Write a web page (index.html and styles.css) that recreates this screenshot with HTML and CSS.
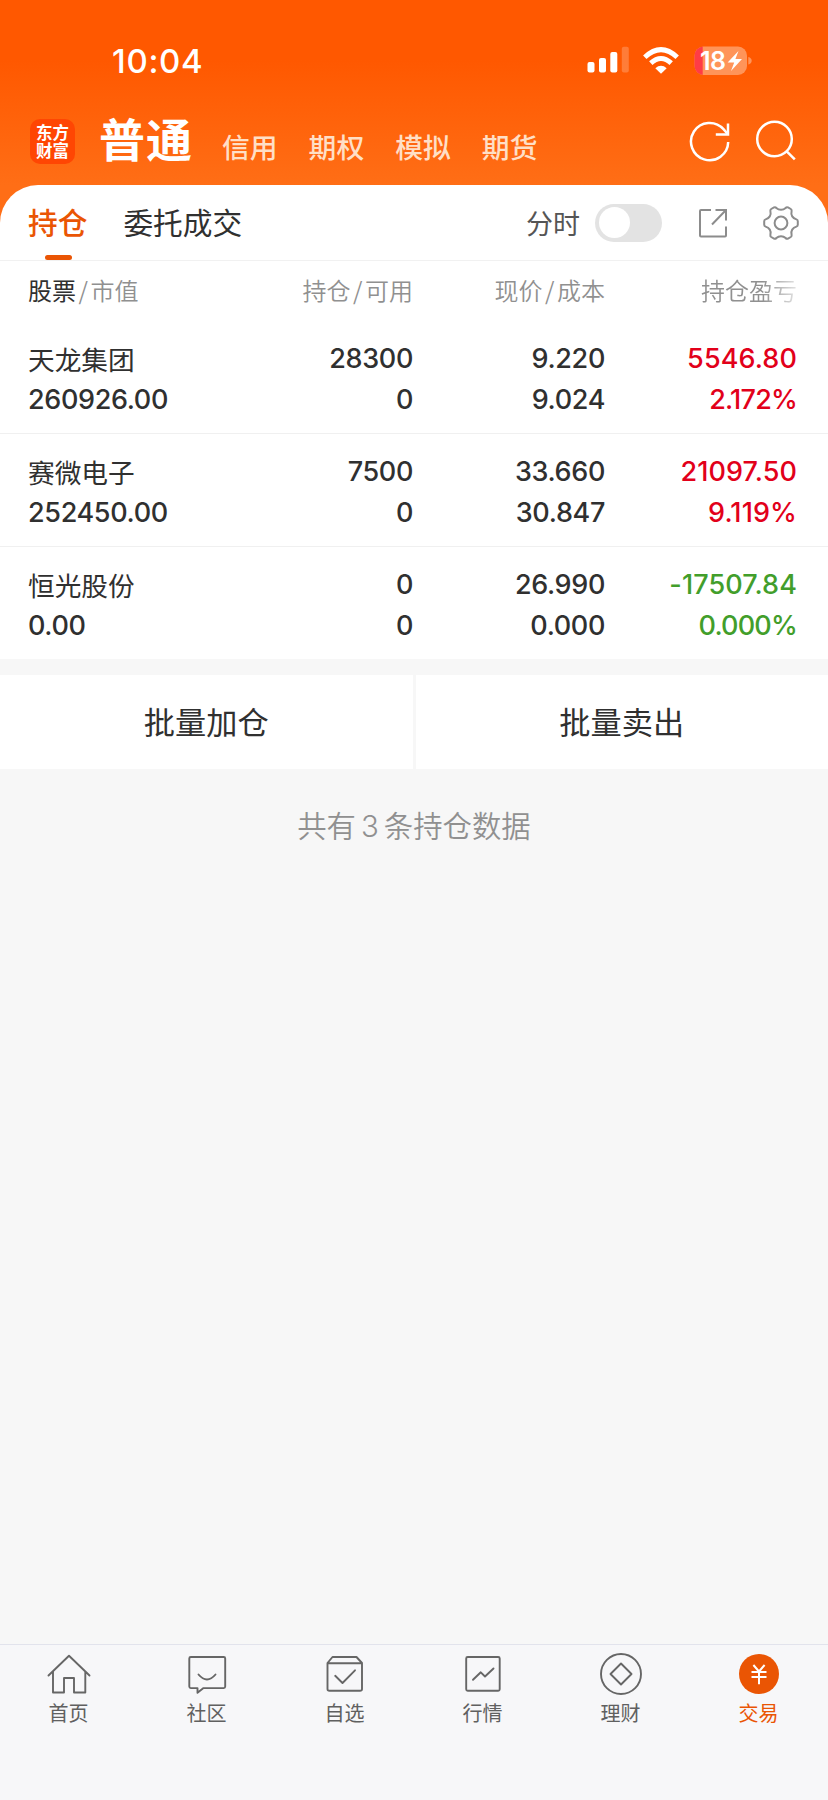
FILE: index.html
```html
<!DOCTYPE html>
<html lang="zh-CN">
<head>
<meta charset="utf-8">
<title>持仓</title>
<link rel="stylesheet" href="styles.css">
</head>
<body>
<div class="app">
  <header class="top">
    <div class="status">
      <span class="time">10:04</span>
      <svg class="status-icons" width="170" height="36" viewBox="584 43 170 36">
        <g fill="#fff">
          <rect x="587.5" y="62" width="7" height="10.5" rx="2"/>
          <rect x="599" y="58" width="7" height="14.5" rx="2"/>
          <rect x="610.3" y="52" width="7" height="20.5" rx="2"/>
          <rect x="621.8" y="46.8" width="7" height="25.7" rx="2" opacity=".22"/>
        </g>
        <g fill="none" stroke="#fff" stroke-width="5">
          <path d="M644.8 57.2Q661 42 677.2 57.2"/>
          <path d="M650.8 63.2Q661 53.8 671.2 63.2"/>
        </g>
        <path d="M655.3 68.2Q661 63.5 666.7 68.2L661 73.8Z" fill="#fff"/>
        <clipPath id="bat"><rect x="694.5" y="46.5" width="52.5" height="28.5" rx="9"/></clipPath>
        <g clip-path="url(#bat)">
          <rect x="694" y="46" width="54" height="30" fill="#ff9459"/>
          <rect x="694" y="46" width="8.7" height="30" fill="#ff3c46"/>
        </g>
        <path d="M748.3 57q3.4 1 3.4 3.8t-3.4 3.8z" fill="#ff9459"/>
        <text class="bat-text" x="700" y="70">18</text>
        <path d="M738.5 51L727.6 62.6h6.6l-3.2 8.4 11-12h-6.6z" fill="#fff"/>
      </svg>
    </div>
    <div class="nav-top">
      <div class="logo"><span>东方</span><span>财富</span></div>
      <span class="account">普通</span>
      <nav class="accounts"><span>信用</span><span>期权</span><span>模拟</span><span>期货</span></nav>
      <svg class="top-icons" width="112" height="44" viewBox="687 118 112 44" fill="none" stroke="#fff" stroke-width="2.5">
        <path d="M728.2 142A18.6 18.6 0 1 1 723.5 129.2L727.5 133.8"/>
        <path d="M728 123.5V134.4H715.8"/>
        <circle cx="774.5" cy="139" r="17.3"/>
        <path d="M786.7 151.3L794.8 159.4"/>
      </svg>
    </div>
  </header>

  <main class="sheet">
    <div class="tabs">
      <span class="tab active">持仓</span>
      <span class="tab">委托成交</span>
      <span class="switch-label">分时</span>
      <span class="switch"><i></i></span>
      <svg class="tool share" width="32" height="32" viewBox="0 0 32 32" fill="none" stroke="#8c8c8c" stroke-width="2">
        <path d="M14 3H4Q3 3 3 4V28.5Q3 29.5 4 29.5H28Q29 29.5 29 28.5V19.5M18.5 3H29V13.5M29 3L15 17.5"/>
      </svg>
      <svg class="tool gear" width="36" height="36" viewBox="-18 -18 36 36" fill="none" stroke="#8c8c8c" stroke-width="2" stroke-linejoin="round">
        <circle r="6.4"/>
        <path d="M-7 -15.6Q-5.6 -16.2 -4.6 -15Q-2.8 -13.2 0 -13.2Q2.8 -13.2 4.6 -15Q5.6 -16.2 7 -15.6L9.8 -14Q11 -13.2 10.6 -11.8Q9.8 -8.8 11.2 -6.6Q12.6 -4.4 15.4 -3.6Q16.8 -3.2 16.8 -1.8V1.8Q16.8 3.2 15.4 3.6Q12.6 4.4 11.2 6.6Q9.8 8.8 10.6 11.8Q11 13.2 9.8 14L7 15.6Q5.6 16.2 4.6 15Q2.8 13.2 0 13.2Q-2.8 13.2 -4.6 15Q-5.6 16.2 -7 15.6L-9.8 14Q-11 13.2 -10.6 11.8Q-9.8 8.8 -11.2 6.6Q-12.6 4.4 -15.4 3.6Q-16.8 3.2 -16.8 1.8V-1.8Q-16.8 -3.2 -15.4 -3.6Q-12.6 -4.4 -11.2 -6.6Q-9.8 -8.8 -10.6 -11.8Q-11 -13.2 -9.8 -14Z"/>
      </svg>
    </div>
    <div class="row head">
      <span><b>股票</b><i>/</i>市值</span>
      <span>持仓<i>/</i>可用</span>
      <span>现价<i>/</i>成本</span>
      <span class="fade">持仓盈亏</span>
    </div>
    <div class="row">
      <span class="name">天龙集团</span><span>28300</span><span>9.220</span><span class="up long">5546.80</span>
      <span>260926.00</span><span>0</span><span>9.024</span><span class="up pct">2.172%</span>
    </div>
    <div class="row">
      <span class="name">赛微电子</span><span>7500</span><span>33.660</span><span class="up long">21097.50</span>
      <span>252450.00</span><span>0</span><span>30.847</span><span class="up long">9.119%</span>
    </div>
    <div class="row last">
      <span class="name">恒光股份</span><span>0</span><span>26.990</span><span class="down long">-17507.84</span>
      <span>0.00</span><span>0</span><span>0.000</span><span class="down pct">0.000%</span>
    </div>
  </main>

  <div class="actions"><span>批量加仓</span><span>批量卖出</span></div>
  <p class="summary">共有<i>3</i>条持仓数据</p>

  <footer class="tabbar">
    <div class="item">
      <svg width="44" height="44" viewBox="0 0 44 44"><path d="M1.5 22.5L22 2.8 42.5 22.5M6 18.5V39.5H17V25H27V39.5H38.3V18.5"/></svg>
      <span>首页</span>
    </div>
    <div class="item">
      <svg width="44" height="44" viewBox="0 0 44 44"><path d="M5.8 4H38.7Q40.2 4 40.2 5.5V33.6Q40.2 35.1 38.7 35.1H18.5L12.5 39.8V35.1H5.8Q4.3 35.1 4.3 33.6V5.5Q4.3 4 5.8 4ZM13.5 21.5Q22 31.5 30.5 21.5"/></svg>
      <span>社区</span>
    </div>
    <div class="item">
      <svg width="44" height="44" viewBox="0 0 44 44"><path d="M4.5 10L9.5 4H33.5L39 10V36Q39 37.8 37 37.8H6.5Q4.5 37.8 4.5 36ZM4.5 10.3H39M12.2 22.8L19.5 30 32 17.3"/></svg>
      <span>自选</span>
    </div>
    <div class="item">
      <svg width="44" height="44" viewBox="0 0 44 44"><rect x="5.2" y="4" width="33.5" height="33.8" rx="1.5"/><path d="M12 26.8L19.8 19.3 24 23.5 32.5 15.5"/></svg>
      <span>行情</span>
    </div>
    <div class="item">
      <svg width="44" height="44" viewBox="0 0 44 44"><circle cx="22" cy="21" r="20"/><path d="M22 10.5L32.5 21 22 31.5 11.5 21Z"/></svg>
      <span>理财</span>
    </div>
    <div class="item on">
      <svg width="44" height="44" viewBox="0 0 44 44"><circle class="disc" cx="22" cy="21" r="20"/><path class="yen" d="M16.4 12L22 18.5 27.6 12M14.5 18.9H29.5M14.5 24H29.5M22 18.5V31.3"/></svg>
      <span>交易</span>
    </div>
  </footer>
</div>
</body>
</html>
```
FILE: styles.css
```css
* { box-sizing: border-box; }
body { margin: 0; background: #f7f7f8; }
i { font-style: normal; }
.app {
  width: 828px;
  height: 1800px;
  display: flex;
  flex-direction: column;
  background: #f7f7f7;
  color: #303030;
  font-family: "Noto Sans CJK SC", sans-serif;
}

.top {
  height: 235px;
  flex: none;
  background: linear-gradient(#ff5800 0, #ff5800 60px, #ff6e16 185px);
  color: #fff;
}
.status { display: flex; justify-content: space-between; height: 96px; padding: 43px 74px 0 112px; }
.time { font: 550 33px/37px Inter, sans-serif; letter-spacing: .7px; }
.bat-text { font: 600 25px Inter, sans-serif; fill: #fff; letter-spacing: -.6px; }
.nav-top { display: flex; height: 88px; padding: 0 29px 0 30px; }
.logo {
  width: 45px;
  height: 45px;
  margin-top: 23px;
  padding-top: 4px;
  border-radius: 10px;
  background: #ff4603;
  display: flex;
  flex-direction: column;
  align-items: center;
  font: 700 16.5px/18px "Noto Sans CJK SC", sans-serif;
}
.account { margin: 9px 0 0 24px; font-size: 46px; line-height: 64px; font-weight: 700; letter-spacing: 1px; }
.accounts { display: flex; gap: 31px; margin: 30px 0 0 29px; font-size: 27.8px; line-height: 40px; font-weight: 500; color: #ffdfc6; }
.top-icons { margin: 22px 0 0 auto; }

.sheet { height: 474px; flex: none; margin-top: -50px; background: #fff; border-radius: 38px 38px 0 0; }
.tabs { display: flex; align-items: center; height: 76px; padding: 0 29px 0 28px; border-bottom: 1px solid #f1f1f1; font-size: 29.7px; }
.tab { height: 75px; line-height: 74px; margin-right: 36px; }
.active { display: flex; flex-direction: column; align-items: center; color: #ea5504; font-weight: 500; }
.active::after { content: ""; width: 27px; height: 5px; margin: -4px 0 0 1px; border-radius: 2.5px; background: #ea5504; }
.switch-label { margin-left: auto; font-size: 27px; line-height: 74px; color: #555; }
.switch { width: 67px; height: 38px; margin-left: 15px; padding: 3.5px; border-radius: 19px; background: #e3e3e3; }
.switch i { display: block; width: 31px; height: 31px; border-radius: 50%; background: #fff; }
.share { margin-left: 35px; }
.gear { margin-left: 34px; }

.row {
  display: grid;
  grid-template-columns: 200px 185px 192px 192px;
  grid-auto-rows: 41px;
  height: 113px;
  padding: 17px 31px 0 28px;
  border-bottom: 1px solid #f0f0f0;
  font: 550 27px/42px Inter, "Noto Sans CJK SC", sans-serif;
  letter-spacing: -.35px;
  text-align: right;
}
.row > :nth-child(4n + 1) { text-align: left; }
.last { border: 0; }
.row .name { font: 400 26.7px/42px "Noto Sans CJK SC", sans-serif; letter-spacing: 0; }
.row .up { color: #e2001a; }
.row .down { color: #429e2b; }
.row .long { letter-spacing: .1px; }
.row .pct { letter-spacing: -.8px; }
.head { height: 60px; padding-top: 8px; border: 0; font: 350 24px/41px "Noto Sans CJK SC", sans-serif; letter-spacing: 0; color: #909090; }
.head b { font-weight: 400; color: #303030; }
.head i { margin: 0 2.5px; }
.fade { -webkit-mask-image: linear-gradient(to right, #000 82%, rgba(0,0,0,.25)); mask-image: linear-gradient(to right, #000 82%, rgba(0,0,0,.25)); }

.actions { display: grid; grid-template-columns: 1fr 1fr; gap: 3px; margin-top: 16px; height: 94px; flex: none; font-size: 31.2px; line-height: 92px; text-align: center; }
.actions span { background: #fff; }
.summary { margin: 33px 0 0; font-size: 29.4px; line-height: 44px; font-weight: 350; text-align: center; color: #909090; }
.summary i { margin: 0 5px; font-family: Inter, sans-serif; font-weight: 350; }

.tabbar { display: flex; height: 156px; margin-top: auto; border-top: 1px solid #e2e3ec; background: #f7f7f9; }
.item { width: 138px; padding-top: 8px; display: flex; flex-direction: column; align-items: center; font-size: 20px; line-height: 30px; color: #606060; }
.item svg { display: block; fill: none; stroke: #666; stroke-width: 1.9; stroke-linejoin: round; stroke-linecap: round; }
.item span { margin: 1px 1px 0 0; }
.on { color: #ea5504; }
.item .disc { fill: #ea5504; stroke: none; }
.item .yen { stroke: #fff; stroke-width: 2; stroke-linecap: butt; }
```
